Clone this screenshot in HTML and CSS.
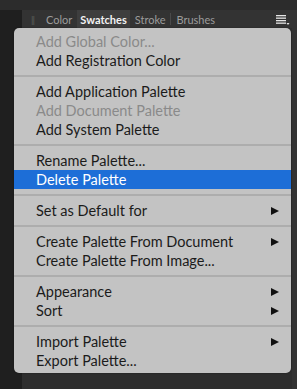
FILE: index.html
```html
<!DOCTYPE html>
<html>
<head>
<meta charset="utf-8">
<link rel="stylesheet" href="styles.css">
</head>
<body>
<div class="app">
  <div class="topstrip"></div>
  <div class="main">
    <div class="sidebar"></div>
    <div class="panel">
      <div class="tabbar">
        <span class="grip">||</span>
        <span class="tab">Color</span>
        <span class="tab active">Swatches</span>
        <span class="tab">Stroke</span>
        <span class="tabsep"></span>
        <span class="tab">Brushes</span>
        <span class="spacer"></span>
        <svg class="burger" width="14" height="10" viewBox="0 0 14 10">
          <rect x="0" y="0" width="10" height="1.3" fill="#e6e6e6"/>
          <rect x="0" y="2.5" width="10" height="1.3" fill="#e6e6e6"/>
          <rect x="0" y="5" width="10" height="1.3" fill="#e6e6e6"/>
          <rect x="0" y="7.5" width="10" height="1.3" fill="#e6e6e6"/>
          <polygon points="10.5,8 13.5,8 12,10" fill="#e6e6e6"/>
        </svg>
      </div>
      <div class="panelbody"></div>
    </div>
    <div class="rightedge"></div>
  </div>
</div>

<div class="menu">
  <div class="item disabled">Add Global Color...</div>
  <div class="item">Add Registration Color</div>
  <div class="sep"></div>
  <div class="item">Add Application Palette</div>
  <div class="item disabled">Add Document Palette</div>
  <div class="item">Add System Palette</div>
  <div class="sep"></div>
  <div class="item">Rename Palette...</div>
  <div class="item selected">Delete Palette</div>
  <div class="sep"></div>
  <div class="item sub">Set as Default for<span class="arrow"></span></div>
  <div class="sep"></div>
  <div class="item sub">Create Palette From Document<span class="arrow"></span></div>
  <div class="item">Create Palette From Image...</div>
  <div class="sep"></div>
  <div class="item sub">Appearance<span class="arrow"></span></div>
  <div class="item sub">Sort<span class="arrow"></span></div>
  <div class="sep"></div>
  <div class="item sub">Import Palette<span class="arrow"></span></div>
  <div class="item">Export Palette...</div>
</div>
</body>
</html>
```

FILE: styles.css
```css
html, body {
  margin: 0;
  padding: 0;
}
body {
  width: 297px;
  height: 389px;
  overflow: hidden;
  background: #2b2b2b;
  font-family: Lato, "Liberation Sans", sans-serif;
}
.app {
  display: flex;
  flex-direction: column;
  height: 389px;
}
.topstrip {
  height: 10px;
  background: #2c2c2c;
}
.main {
  flex: 1;
  display: flex;
}
.sidebar {
  width: 22px;
  background: #1f1f1f;
}
.panel {
  flex: 1;
  display: flex;
  flex-direction: column;
  background: #2e2e2e;
}
.tabbar {
  height: 18px;
  display: flex;
  align-items: center;
  background: #333333;
  font-size: 11px;
  color: #9c9c9c;
}
.grip {
  color: #5e5e5e;
  font-size: 10px;
  margin-left: 9px;
  margin-right: 9px;
  letter-spacing: -1px;
}
.tab {
  padding: 0 3px;
  height: 18px;
  line-height: 19px;
}
.tab.active {
  background: #3e3e3e;
  color: #f2f2f2;
  font-weight: 700;
  padding: 0 3px 0 3px;
  margin: 0 2px;
}
.tabsep {
  width: 1px;
  height: 12px;
  background: #4a4a4a;
  margin: 0 2px;
}
.spacer { flex: 1; }
.burger {
  margin-right: 2px;
  margin-top: 2px;
}
.panelbody {
  flex: 1;
}
.rightedge {
  width: 5px;
  background: #333;
}

.menu {
  position: absolute;
  left: 14px;
  top: 28px;
  width: 277px;
  padding: 4px 0 3px;
  background: #c3c3c3;
  border-radius: 5px;
  box-shadow: 0 0 2px rgba(0,0,0,0.35);
  font-family: Lato, "Liberation Sans", sans-serif;
  font-size: 14.5px;
  color: #1b1b1b;
}
.item {
  height: 19px;
  line-height: 19px;
  padding-left: 22px;
  display: flex;
  align-items: center;
  white-space: nowrap;
}
.item.disabled {
  color: #8a8a8a;
}
.item.selected {
  background: #1d6ed7;
  color: #ffffff;
}
.sub {
  justify-content: space-between;
  padding-right: 12px;
}
.arrow {
  width: 0;
  height: 0;
  border-left: 8px solid #111;
  border-top: 4px solid transparent;
  border-bottom: 4px solid transparent;
}
.sep {
  height: 2px;
  margin: 5px 0;
  background: #adadad;
}
```
